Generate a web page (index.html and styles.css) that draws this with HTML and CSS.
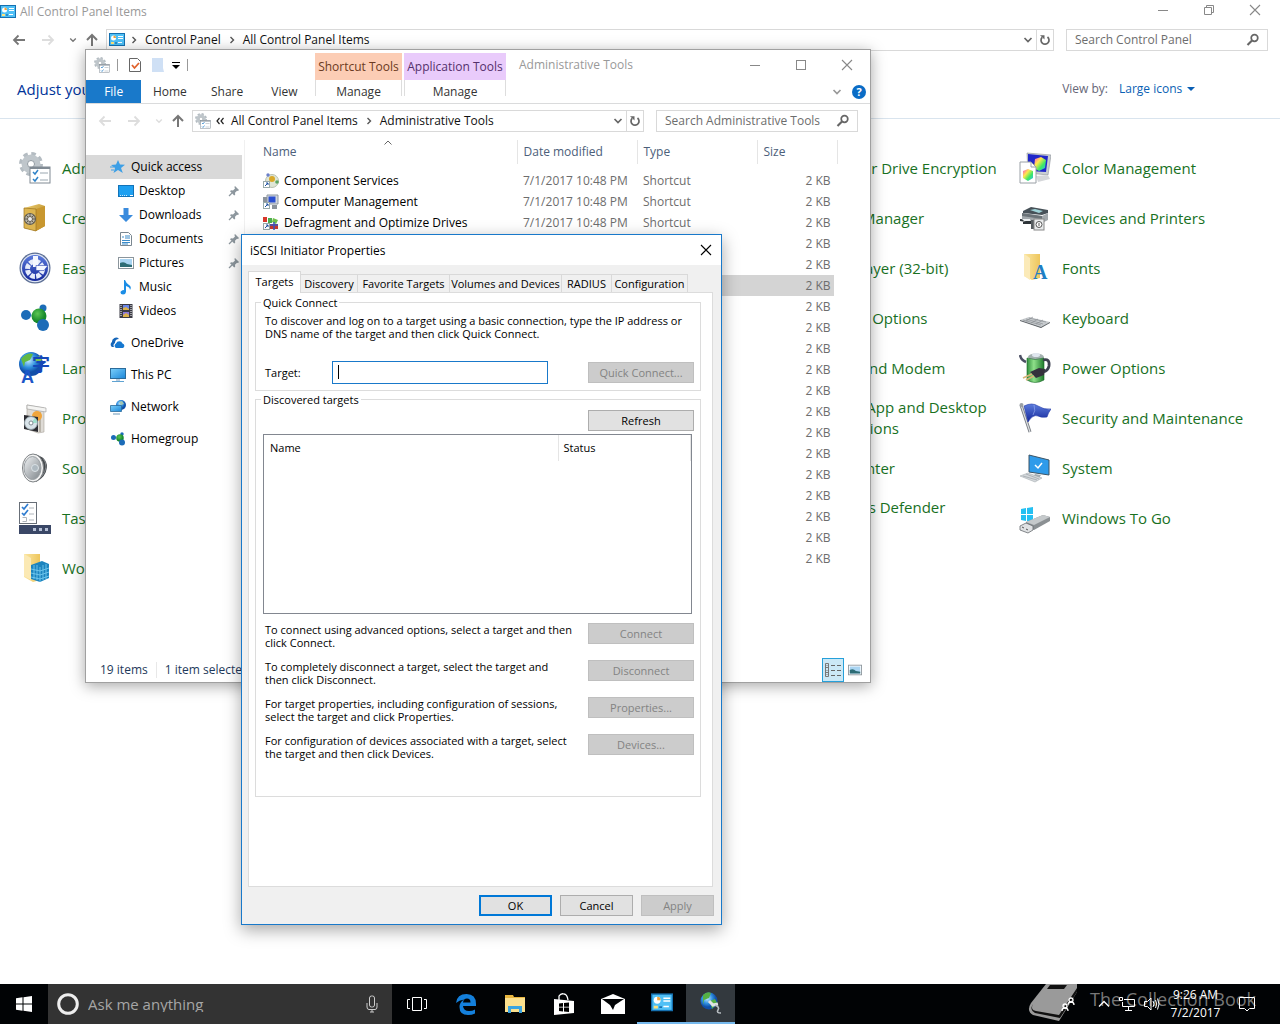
FILE: index.html
```html
<!DOCTYPE html>
<html lang="en">
<head>
    <meta charset="UTF-8">
    <meta name="viewport" content="width=device-width, initial-scale=1.0">
    <title>iSCSI Initiator Properties</title>
    <link rel="stylesheet" href="styles.css">
</head>
<body>

    <!-- Icon sprite -->
    <svg class="sprite" aria-hidden="true">
        <defs>
            <linearGradient id="g-green" x1="0" x2="1"><stop offset="0" stop-color="#2f8f3c"/><stop offset=".4" stop-color="#8fe08a"/><stop offset="1" stop-color="#1e7a2c"/></linearGradient>
            <linearGradient id="g-blue" x1="0" x2="1" y2="1"><stop offset="0" stop-color="#7cd0fb"/><stop offset="1" stop-color="#1b86d8"/></linearGradient>
            <linearGradient id="g-navy" x1="0" x2="0" y2="1"><stop offset="0" stop-color="#5b7bdc"/><stop offset="1" stop-color="#14279a"/></linearGradient>
            <linearGradient id="g-gold" x1="0" x2="1" y2="1"><stop offset="0" stop-color="#f0d070"/><stop offset="1" stop-color="#a87a1c"/></linearGradient>
            <linearGradient id="g-fold" x1="0" x2="1"><stop offset="0" stop-color="#fbe6a2"/><stop offset="1" stop-color="#eec65c"/></linearGradient>
            <linearGradient id="g-grey" x1="0" x2="1" y2="1"><stop offset="0" stop-color="#f0f2f4"/><stop offset="1" stop-color="#7d8489"/></linearGradient>
            <radialGradient id="g-globe" cx=".4" cy=".35"><stop offset="0" stop-color="#c4ecff"/><stop offset=".6" stop-color="#2f8fe0"/><stop offset="1" stop-color="#114fa8"/></radialGradient>
            <radialGradient id="g-ball" cx=".4" cy=".35"><stop offset="0" stop-color="#5cc653"/><stop offset="1" stop-color="#178a2b"/></radialGradient>
            <linearGradient id="g-rain" x1="0" x2="1" y2="1"><stop offset="0" stop-color="#ff4ad2"/><stop offset=".35" stop-color="#ffe84a"/><stop offset=".65" stop-color="#3de864"/><stop offset="1" stop-color="#29b9ff"/></linearGradient>
        </defs>

        <symbol id="i-panel" viewBox="0 0 16 14">
            <rect x=".5" y=".5" width="15" height="12" fill="#4fc0f6" stroke="#1570b0"/>
            <circle cx="4.5" cy="5" r="2.5" fill="#fff"/><path d="M4.500 5V2.500a2.500 2.500 0 0 1 2.500 2.500z" fill="#f2a33a"/>
            <path d="M9 3.500h5M9 5.500h5M9 9.500h4" stroke="#fff"/><rect x="2" y="9" width="3" height="2" fill="#ffe27a"/><path d="M6 10h2" stroke="#0b5c9c"/>
        </symbol>
        <symbol id="i-back" viewBox="0 0 16 16"><path d="M14 8H3M7.500 3.500L3 8l4.500 4.500" fill="none" stroke="currentColor" stroke-width="1.800"/></symbol>
        <symbol id="i-fwd" viewBox="0 0 16 16"><path d="M2 8h11M8.500 3.500L13 8l-4.500 4.500" fill="none" stroke="currentColor" stroke-width="1.800"/></symbol>
        <symbol id="i-up" viewBox="0 0 16 16"><path d="M8 14V3M3 8l5-5 5 5" fill="none" stroke="currentColor" stroke-width="2"/></symbol>
        <symbol id="i-chev" viewBox="0 0 10 10"><path d="M1.500 3l3.500 3.500L8.500 3" fill="none" stroke="currentColor" stroke-width="1.700"/></symbol>
        <symbol id="i-right" viewBox="0 0 8 8"><path d="M2.500 1l3 3-3 3" fill="none" stroke="currentColor" stroke-width="1.400"/></symbol>
        <symbol id="i-refresh" viewBox="0 0 12 12"><path d="M3.200 3.300A4 4 0 1 0 8.500 3" fill="none" stroke="currentColor" stroke-width="1.700"/><path d="M1 1.200h4.500v4.300z" fill="currentColor"/></symbol>
        <symbol id="i-search" viewBox="0 0 14 14"><circle cx="8.500" cy="5" r="3.300" fill="none" stroke="currentColor" stroke-width="1.700"/><path d="M6 7.500L1.500 12" stroke="currentColor" stroke-width="2.200"/></symbol>
        <symbol id="i-min" viewBox="0 0 12 12"><path d="M1 6.500h10" stroke="currentColor"/></symbol>
        <symbol id="i-max" viewBox="0 0 12 12"><rect x="1.500" y="1.500" width="9" height="9" fill="none" stroke="currentColor"/></symbol>
        <symbol id="i-restore" viewBox="0 0 12 12"><path d="M1.500 3.500h7v7h-7zM3.500 3.500v-2h7v7h-2" fill="none" stroke="currentColor"/></symbol>
        <symbol id="i-close" viewBox="0 0 12 12"><path d="M1 1l10 10M11 1L1 11" stroke="currentColor" stroke-width="1.100"/></symbol>

        <symbol id="i-admin" viewBox="0 0 32 32">
            <circle cx="12" cy="12" r="10" fill="none" stroke="#b4bcc2" stroke-width="4" stroke-dasharray="4.400 3.450"/>
            <circle cx="12" cy="12" r="6.500" fill="none" stroke="#bfc6cb" stroke-width="6"/>
            <circle cx="12" cy="12" r="3.500" fill="#fff" stroke="#8f989f"/>
            <rect x="11" y="15" width="20" height="16" fill="#fff" stroke="#808a93"/><path d="M11 16h20" stroke="#808a93" stroke-width="2"/>
            <path d="M14 20l2 2 3-4M14 27l2 2 3-4" fill="none" stroke="#2f83c8" stroke-width="1.500"/><path d="M21 21h8M21 28h8" stroke="#9aa7b0"/>
        </symbol>
        <symbol id="i-safe" viewBox="0 0 32 32">
            <path d="M5 6l15-4 6 2v20l-9 5-12-3z" fill="url(#g-gold)"/><path d="M17 7v22l9-5V4z" fill="#c8972f"/><path d="M5 6l12 1v22L5 26z" fill="#ddb550" stroke="#9c7420" stroke-width=".7"/>
            <circle cx="11" cy="17" r="5.500" fill="#b9b5a8" stroke="#655f51" stroke-width="1.200"/><path d="M11 11v12M5 17h12M7 13l8 8M15 13l-8 8" stroke="#655f51"/><circle cx="11" cy="17" r="2.500" fill="#eee" stroke="#655f51"/>
        </symbol>
        <symbol id="i-ease" viewBox="0 0 32 32">
            <circle cx="16" cy="16" r="15.500" fill="#5c6f95"/><circle cx="16" cy="16" r="14.300" fill="#dfe6f4"/><circle cx="16" cy="16" r="13" fill="url(#g-navy)"/>
            <circle cx="16" cy="17" r="7.500" fill="none" stroke="#e6ecfa" stroke-width="5" stroke-dasharray="4.600 1.290"/>
            <path d="M14 4h5v11h-5z" fill="#f4f7ff"/><path d="M17 13.500h12l-4 5h-8z" fill="#f4f7ff" stroke="#2c45ae" stroke-width=".6"/>
        </symbol>
        <symbol id="i-home" viewBox="0 0 32 32">
            <path d="M7 13l13 1 4-8M20 14l4 10" stroke="#9ccbe8" stroke-width="2" fill="none"/>
            <circle cx="7" cy="13" r="5" fill="#1c6cb8"/><circle cx="24" cy="6" r="3.500" fill="#1c6cb8"/><circle cx="20" cy="14" r="7.500" fill="url(#g-ball)"/><circle cx="24" cy="23" r="6" fill="#1c6cb8"/>
        </symbol>
        <symbol id="i-prog" viewBox="0 0 32 32">
            <path d="M8 3l17 3v24l-6 1-11-4z" fill="#dedbd6" stroke="#a9a49c" stroke-width=".6"/><path d="M8 3l19 3v4L8 7z" fill="#f4f4f2" stroke="#999" stroke-width=".6"/><path d="M21 10v20" stroke="#b9b4aa" stroke-width="2"/><circle cx="18" cy="14" r="5" fill="#f0a53c"/>
            <path d="M5 13l14 2v15L5 27z" fill="#2c2c31"/><circle cx="12" cy="21" r="6.500" fill="#d9e4ea" stroke="#8b989f"/><path d="M12 21l4-5a6 6 0 0 1 2 5z" fill="#9fe0cd"/><circle cx="12" cy="21" r="2" fill="#fff" stroke="#808b92"/>
        </symbol>
        <symbol id="i-sound" viewBox="0 0 32 32">
            <path d="M15 2q13 3 13 13-1 10-11 15z" fill="#44484c"/><path d="M24 6q3 4 3 9-1 6-4 9" stroke="#85898d" fill="none"/>
            <ellipse cx="14" cy="16" rx="10.500" ry="14" fill="#f3f3f3" stroke="#7d8184"/><ellipse cx="13.500" cy="16" rx="8.500" ry="11.500" fill="url(#g-grey)" stroke="#9aa0a4"/><circle cx="16" cy="16" r="3.500" fill="#aeb9c0" stroke="#dbe2e6"/>
        </symbol>
        <symbol id="i-task" viewBox="0 0 32 32">
            <rect x=".5" y=".5" width="17" height="21" fill="#fff" stroke="#686f78"/><path d="M3 5l2 2 4-5M3 11l2 2 4-5" fill="none" stroke="#2f7cd0" stroke-width="1.700"/><path d="M3.500 15.500h4v4h-4M10 6h5M10 12h5M10 18h5" fill="none" stroke="#b0b6bc"/>
            <rect y="23" width="32" height="9" fill="#3a4766"/><path d="M14 27.500h3M20 27.500h3M26 27.500h3" stroke="#b6c0d6" stroke-width="3"/>
        </symbol>
        <symbol id="i-work" viewBox="0 0 32 32">
            <path d="M5 2h16v26l-7 2-9-5z" fill="url(#g-fold)"/><path d="M5 2l7 4v22l-7-4z" fill="#fbe9b4"/>
            <path d="M12 13l11-4 7 3v14l-9 4-9-3z" fill="#1c84bf"/><path d="M21 15v15M12 17l9 2 9-3M12 21l9 2 9-3M12 25l9 2 9-3M15 13v14M18 13v15M24 13v15M27 12v15" stroke="#7cd1f4" stroke-width=".8" fill="none"/>
        </symbol>
        <symbol id="i-color" viewBox="0 0 32 32">
            <path d="M8 1l24 2-3 20-20-2z" fill="#c9ced3" stroke="#8b9197" stroke-width=".6"/><path d="M9 2l20 2-2 16-18-1z" fill="#2127c9"/><path d="M16 7l6-2 5 3-1 8-6 3-5-3z" fill="url(#g-rain)"/>
            <path d="M17 24l12-1 2 4-12 3z" fill="#d5d7da"/><path d="M1 10h11l5 5v16H1z" fill="#fff" stroke="#9aa0a6"/><path d="M12 10v5h5" fill="none" stroke="#9aa0a6"/><path d="M4 19l5-2 5 2v7l-5 3-5-3z" fill="url(#g-rain)"/>
        </symbol>
        <symbol id="i-print" viewBox="0 0 32 32">
            <path d="M4 9l8-4 17 3v3l-6 2-19-2z" fill="#475158"/><path d="M11 8l5-1 8 2-4 2z" fill="#9fd3d8"/><path d="M3 11l20 3 6-3v7l-6 3-20-4z" fill="#a2a8ac"/><path d="M3 11l20 3v3L3 14z" fill="#6b7378"/>
            <path d="M1 17l12 1v3L1 19zM4 20h8v2H4z" fill="#2e3438"/><path d="M3 17l8 0 1 2-7 0z" fill="#eceff0"/><path d="M12 18h4v9h-4z" fill="#565c60"/><rect x="15" y="17" width="10" height="11" fill="#e8eaeb" stroke="#888"/><circle cx="20" cy="22.500" r="3" fill="#fff" stroke="#555"/><path d="M20 21v3" stroke="#555"/>
        </symbol>
        <symbol id="i-keyb" viewBox="0 0 32 32">
            <path d="M1 18l9-3 21 5-9 6z" fill="#c7cbce"/><path d="M1 18v1l21 7v-1zM22 25v1l9-5v-1z" fill="#5d6266"/><path d="M4 18l18 5M7 17l17 5M10 16l17 4M7 19l7-4M12 21l7-4M17 22l7-4" stroke="#8c9195" stroke-width=".7"/>
        </symbol>
        <symbol id="i-power" viewBox="0 0 32 32">
            <path d="M1 3q1 5 6 7" fill="none" stroke="#4b4f63" stroke-width="2.500"/><ellipse cx="17" cy="5" rx="8" ry="3.500" fill="#a4b1b0"/><ellipse cx="17" cy="3" rx="4" ry="2" fill="#dfe6ee"/>
            <path d="M8 6v22q8 5 17 0V6q-9 3-17 0z" fill="url(#g-green)" stroke="#1a6a27" stroke-width=".6"/><path d="M24 8q7-2 6 6-1 5-6 6" fill="none" stroke="#3d4050" stroke-width="2.800"/>
            <path d="M11 20l9-4 6 1-1 6-8 3z" fill="#34313c"/><path d="M4 26l9-4M7 28l8-4" stroke="#d7b377" stroke-width="1.800"/>
        </symbol>
        <symbol id="i-flag" viewBox="0 0 32 32">
            <path d="M2 3l9 27" stroke="#777c82" stroke-width="3"/><path d="M2 3l9 27" stroke="#dcdfe2" stroke-width="1.200"/><circle cx="2.500" cy="3" r="2" fill="#9ba0a5"/>
            <path d="M5 4q8-4 14 0 6 4 13 3-3 4-4 8-6 1-9-1-5-2-10 6z" fill="url(#g-navy)" stroke="#2038a8" stroke-width=".6"/><path d="M15 3q2 6-1 10" stroke="#9db1f4" fill="none" opacity=".6"/>
        </symbol>
        <symbol id="i-sys" viewBox="0 0 32 32">
            <path d="M10 3l20 5v15l-20-3z" fill="#2f9bea" stroke="#3c5566"/><path d="M16 13l3 3 4-5" fill="none" stroke="#fff" stroke-width="1.500"/><path d="M16 22l6 1-2 3-6-1z" fill="#a4adb3"/><path d="M1 24l8-3 14 5-7 4z" fill="#d4d8db" stroke="#9ba2a7" stroke-width=".5"/><path d="M4 24l14 4M7 22l13 5" stroke="#9ba2a7" stroke-width=".7"/>
        </symbol>
        <symbol id="i-togo" viewBox="0 0 32 32">
            <path d="M2 7l5-1v6H2zM8 6l6-1v7H8zM2 13h5v6l-5-1zM8 13h6v7l-6-1z" fill="#25c0f2"/>
            <path d="M7 20l17-7 7 2v4l-16 9-8-3z" fill="#8b9093"/><path d="M7 20l17-7 7 2-16 8z" fill="#c5c9cb"/><path d="M1 24l6-3 7 3v4l-5 3-8-3z" fill="#dfe1e3" stroke="#666b6e" stroke-width=".8"/><path d="M3 25l2 1M7 27l2 1" stroke="#555"/>
        </symbol>

        <symbol id="i-star" viewBox="0 0 16 16"><path d="M8 1l2 4.500 5 .3-4 3.200 1.800 5L8 11l-4.500 3 1.500-5L1 6l5-.5z" fill="#3c9fe6"/><path d="M0 8h4M1 11h3" stroke="#3c9fe6"/></symbol>
        <symbol id="i-desk" viewBox="0 0 16 16"><rect x=".5" y="2.500" width="15" height="11" fill="#1ea0f1" stroke="#1373b8"/><path d="M2 12.500h7" stroke="#cdeaff" stroke-dasharray="1 1"/><path d="M12 12.500h3" stroke="#fff"/></symbol>
        <symbol id="i-down" viewBox="0 0 16 16"><path d="M5.500 1h5v7H15l-7 7-7-7h4.500z" fill="#3a8bdd"/></symbol>
        <symbol id="i-doc" viewBox="0 0 16 16"><path d="M2.500 1.500h8l3 3v10h-11z" fill="#fff" stroke="#7a8791"/><path d="M4 6h2M7 5h5M7 7h5M4 9.500h8M4 11.500h8M4 13h6" stroke="#3a8bc9"/></symbol>
        <symbol id="i-pic" viewBox="0 0 16 16"><rect x=".5" y="2.500" width="15" height="11" fill="#fff" stroke="#8b959c"/><rect x="2" y="4" width="12" height="8" fill="#a9d4f2"/><path d="M2 8q4-2 7 1l5 1v2H2z" fill="#2d6c75"/></symbol>
        <symbol id="i-music" viewBox="0 0 16 16"><path d="M7 1q1 3 4 5t1 5q0-3-4-4v6a3 3 0 0 1-3 2.500q-2.500 0-2.500-2T6 11V1z" fill="#1c8ee6"/></symbol>
        <symbol id="i-video" viewBox="0 0 16 16"><rect x="1.500" y="1" width="13" height="14" fill="#3a3a44"/><path d="M3 2v12M13 2v12" stroke="#fff" stroke-dasharray="1 1"/><path d="M5 2h6v5H5z" fill="#6a86e8"/><path d="M5 9h6v5H5z" fill="#8d7ad8"/><path d="M5 5l3-1 3 2v1H5zM5 12l3-2 3 2v2H5z" fill="#d9b04c"/></symbol>
        <symbol id="i-cloud" viewBox="0 0 16 16"><path d="M2 12a3 3 0 0 1 0-5 4 4 0 0 1 7-3 4 4 0 0 0-4 4 3 3 0 0 0-1 4z" fill="#1565b8"/><path d="M6 13a2.500 2.500 0 0 1 0-4.500 3.500 3.500 0 0 1 6.500 0A2.400 2.400 0 0 1 13 13z" fill="#1678d0"/></symbol>
        <symbol id="i-pc" viewBox="0 0 16 16"><rect x=".5" y="1.500" width="15" height="10" fill="url(#g-blue)" stroke="#2b6b9a"/><path d="M2 14.500h12" stroke="#5fa3d2"/><path d="M6 12h4v2H6z" fill="#bcd"/></symbol>
        <symbol id="i-net" viewBox="0 0 16 16"><circle cx="11" cy="6" r="5" fill="url(#g-globe)"/><path d="M9 3l3-1 2 3-3 1z" fill="#a3c6b0"/><path d="M.5 6.500h11v6H.500z" fill="url(#g-blue)" stroke="#2b6b9a" stroke-width=".8"/><path d="M3 15h7" stroke="#6b97b8"/></symbol>
        <symbol id="i-pin" viewBox="0 0 12 12"><path d="M7 1l4 4-1 1-1-.3-2 2 .2 2-1 .8L2 6.300l1-1 2 .2 2-2L6.400 2z" fill="#8d979e"/><path d="M1 11l3-3" stroke="#8d979e" stroke-width="1.200"/></symbol>
        <symbol id="i-comp" viewBox="0 0 16 16"><circle cx="9" cy="8" r="6.500" fill="#dfe6d6" stroke="#b8c0b0"/><circle cx="9" cy="6" r="3" fill="#d9a92b"/><circle cx="5" cy="2" r="1.700" fill="#6a7fc9"/><circle cx="14" cy="9" r="1.800" fill="#5aa562"/><rect x=".5" y="8.500" width="6" height="6" fill="#fff" stroke="#9aa"/><path d="M2 13l3-3M3 10h2v2" stroke="#1a4fa0" fill="none"/></symbol>
        <symbol id="i-comp2" viewBox="0 0 16 16"><path d="M4 1h11v9H4z" fill="#d3d8de" stroke="#8d97a1"/><path d="M5.500 2.500h7v6h-7z" fill="#2a4fd0"/><path d="M0 3h4v5H0zM9 11h5v4H9z" fill="#8b939b"/><rect x=".5" y="8.500" width="6" height="6" fill="#fff" stroke="#9aa"/><path d="M2 13l3-3M3 10h2v2" stroke="#1a4fa0" fill="none"/></symbol>
        <symbol id="i-defrag" viewBox="0 0 16 16"><path d="M0 2h4v5H0z" fill="#d8382c"/><path d="M5 3h4v5H5z" fill="#4cae4f"/><path d="M10 3l5 2-2 4-4-2z" fill="#6fbf4a"/><path d="M7 9h8v5H7z" fill="#c83a30"/><path d="M7 10h8M11 7v8" stroke="#3a57c0" stroke-width="1.500"/><rect x=".5" y="8.500" width="6" height="6" fill="#fff" stroke="#9aa"/><path d="M2 13l3-3M3 10h2v2" stroke="#1a4fa0" fill="none"/></symbol>
    </svg>

    <main class="desktop">

        <!-- Control Panel (maximized) -->
        <section class="panel-window">
            <header class="title-bar">
                <svg class="icon16"><use href="#i-panel"/></svg>
                <span class="title">All Control Panel Items</span>
                <div class="window-controls">
                    <button aria-label="Minimize"><svg><use href="#i-min"/></svg></button>
                    <button aria-label="Restore"><svg><use href="#i-restore"/></svg></button>
                    <button aria-label="Close"><svg><use href="#i-close"/></svg></button>
                </div>
            </header>
            <div class="nav-bar">
                <div class="nav-buttons">
                    <button aria-label="Back"><svg class="icon16"><use href="#i-back"/></svg></button>
                    <button aria-label="Forward" class="off"><svg class="icon16"><use href="#i-fwd"/></svg></button>
                    <button aria-label="Recent"><svg class="icon8"><use href="#i-chev"/></svg></button>
                    <button aria-label="Up"><svg class="icon16"><use href="#i-up"/></svg></button>
                </div>
                <div class="address">
                    <svg class="icon16"><use href="#i-panel"/></svg>
                    <svg class="crumb-arrow"><use href="#i-right"/></svg>
                    <a href="#">Control Panel</a>
                    <svg class="crumb-arrow"><use href="#i-right"/></svg>
                    <a href="#">All Control Panel Items</a>
                    <button class="drop" aria-label="Previous locations"><svg><use href="#i-chev"/></svg></button>
                    <button class="refresh" aria-label="Refresh"><svg><use href="#i-refresh"/></svg></button>
                </div>
                <div class="search">
                    <input type="text" aria-label="Search Control Panel" placeholder="Search Control Panel">
                    <svg><use href="#i-search"/></svg>
                </div>
            </div>
            <div class="panel-head">
                <h1>Adjust your computer's settings</h1>
                <div class="view-by">
                    <label for="view-by">View by:</label>
                    <select id="view-by"><option>Large icons</option></select>
                    <svg viewBox="0 0 8 4"><path d="M0 0h8L4 4z" fill="#0a5fb4"/></svg>
                </div>
            </div>
            <nav class="items">
                <a class="item" href="#"><svg><use href="#i-admin"/></svg><span>Administrative Tools</span></a>
                <a class="item" href="#"><svg><use href="#i-safe"/></svg><span>BitLocker Drive Encryption</span></a>
                <a class="item" href="#"><svg><use href="#i-color"/></svg><span>Color Management</span></a>
                <a class="item" href="#"><svg><use href="#i-safe"/></svg><span>Credential Manager</span></a>
                <a class="item" href="#"><svg><use href="#i-print"/></svg><span>Device Manager</span></a>
                <a class="item" href="#"><svg><use href="#i-print"/></svg><span>Devices and Printers</span></a>
                <a class="item" href="#"><svg><use href="#i-ease"/></svg><span>Ease of Access Center</span></a>
                <a class="item" href="#"><svg><use href="#i-prog"/></svg><span>Flash Player (32-bit)</span></a>
                <a class="item" href="#"><svg viewBox="0 0 32 32"><path d="M5 2h16v24l-8 2-8-4z" fill="url(#g-fold)"/><path d="M5 2l6 4v22l-6-4z" fill="#fbeab8"/><text x="14" y="27" class="glyph-font">A</text></svg><span>Fonts</span></a>
                <a class="item" href="#"><svg><use href="#i-home"/></svg><span>HomeGroup</span></a>
                <a class="item" href="#"><svg><use href="#i-net"/></svg><span>Internet Options</span></a>
                <a class="item" href="#"><svg><use href="#i-keyb"/></svg><span>Keyboard</span></a>
                <a class="item" href="#"><svg viewBox="0 0 32 32"><circle cx="12" cy="12" r="12" fill="url(#g-globe)"/><path d="M2 7q6-7 12-5l-3 6-5 2-1 5z" fill="#62b943"/><path d="M15 6l6-2 2 4-5 3z" fill="#79c455"/><text x="13" y="19" class="glyph-zi">字</text><text x="2" y="31" class="glyph-a">A</text></svg><span>Language</span></a>
                <a class="item" href="#"><svg><use href="#i-print"/></svg><span>Phone and Modem</span></a>
                <a class="item" href="#"><svg><use href="#i-power"/></svg><span>Power Options</span></a>
                <a class="item" href="#"><svg><use href="#i-prog"/></svg><span>Programs and Features</span></a>
                <a class="item" href="#"><svg><use href="#i-sys"/></svg><span>RemoteApp and Desktop Connections</span></a>
                <a class="item" href="#"><svg><use href="#i-flag"/></svg><span>Security and Maintenance</span></a>
                <a class="item" href="#"><svg><use href="#i-sound"/></svg><span>Sound</span></a>
                <a class="item" href="#"><svg><use href="#i-home"/></svg><span>Sync Center</span></a>
                <a class="item" href="#"><svg><use href="#i-sys"/></svg><span>System</span></a>
                <a class="item" href="#"><svg><use href="#i-task"/></svg><span>Taskbar and Navigation</span></a>
                <a class="item" href="#"><svg><use href="#i-safe"/></svg><span>Windows Defender<br>Firewall</span></a>
                <a class="item" href="#"><svg><use href="#i-togo"/></svg><span>Windows To Go</span></a>
                <a class="item" href="#"><svg><use href="#i-work"/></svg><span>Work Folders</span></a>
            </nav>
        </section>

        <!-- Administrative Tools -->
        <section class="tools-window">
            <header class="ribbon">
                <div class="quick-bar">
                    <svg class="icon16"><use href="#i-admin"/></svg>
                    <span class="bar-line"></span>
                    <button aria-label="Properties"><svg class="icon16" viewBox="0 0 16 16"><path d="M2.500 1.500h8l3 3v10h-11z" fill="#fff" stroke="#666"/><path d="M5 8l2.500 3L12 6" fill="none" stroke="#e0622c" stroke-width="1.800"/></svg></button>
                    <button aria-label="New folder"><svg class="icon16" viewBox="0 0 16 16"><path d="M2 1h11v10l1 4H2z" fill="#cfe0f5"/></svg></button>
                    <button aria-label="Customize"><svg class="icon8" viewBox="0 0 8 8"><path d="M0 1.500h8" stroke="#000"/><path d="M0 4h8L4 8z" fill="#000"/></svg></button>
                    <span class="bar-line"></span>
                </div>
                <div class="context context-shortcut">Shortcut Tools</div>
                <div class="context context-app">Application Tools</div>
                <div class="ribbon-title">
                    <span class="title">Administrative Tools</span>
                    <div class="window-controls">
                        <button aria-label="Minimize"><svg><use href="#i-min"/></svg></button>
                        <button aria-label="Maximize"><svg><use href="#i-max"/></svg></button>
                        <button aria-label="Close"><svg><use href="#i-close"/></svg></button>
                    </div>
                </div>
                <div class="ribbon-tabs">
                    <button class="file-tab">File</button>
                    <button>Home</button>
                    <button>Share</button>
                    <button>View</button>
                </div>
                <button class="manage">Manage</button>
                <button class="manage manage-app">Manage</button>
                <div class="ribbon-end">
                    <button aria-label="Expand ribbon"><svg class="icon10"><use href="#i-chev"/></svg></button>
                    <button aria-label="Help"><svg class="icon14" viewBox="0 0 14 14"><circle cx="7" cy="7" r="7" fill="#0a6cc6"/><text x="7" y="11" class="glyph-help">?</text></svg></button>
                </div>
            </header>
            <div class="nav-bar">
                <div class="nav-buttons">
                    <button aria-label="Back" class="off"><svg class="icon16"><use href="#i-back"/></svg></button>
                    <button aria-label="Forward" class="off"><svg class="icon16"><use href="#i-fwd"/></svg></button>
                    <button aria-label="Recent" class="off"><svg class="icon8"><use href="#i-chev"/></svg></button>
                    <button aria-label="Up"><svg class="icon16"><use href="#i-up"/></svg></button>
                </div>
                <div class="address">
                    <svg class="icon16"><use href="#i-admin"/></svg>
                    <svg class="crumb-arrow" viewBox="0 0 8 8"><path d="M3.500 1L1 4l2.500 3M7.500 1L5 4l2.500 3" fill="none" stroke="#222" stroke-width="1.200"/></svg>
                    <a href="#">All Control Panel Items</a>
                    <svg class="crumb-arrow"><use href="#i-right"/></svg>
                    <a href="#">Administrative Tools</a>
                    <button class="drop" aria-label="Previous locations"><svg><use href="#i-chev"/></svg></button>
                    <button class="refresh" aria-label="Refresh"><svg><use href="#i-refresh"/></svg></button>
                </div>
                <div class="search">
                    <input type="text" aria-label="Search Administrative Tools" placeholder="Search Administrative Tools">
                    <svg><use href="#i-search"/></svg>
                </div>
            </div>
            <div class="tools-body">
                <nav class="side">
                    <a href="#" class="root current"><svg class="icon16"><use href="#i-star"/></svg>Quick access</a>
                    <a href="#"><svg class="icon16"><use href="#i-desk"/></svg>Desktop<svg class="pin"><use href="#i-pin"/></svg></a>
                    <a href="#"><svg class="icon16"><use href="#i-down"/></svg>Downloads<svg class="pin"><use href="#i-pin"/></svg></a>
                    <a href="#"><svg class="icon16"><use href="#i-doc"/></svg>Documents<svg class="pin"><use href="#i-pin"/></svg></a>
                    <a href="#"><svg class="icon16"><use href="#i-pic"/></svg>Pictures<svg class="pin"><use href="#i-pin"/></svg></a>
                    <a href="#"><svg class="icon16"><use href="#i-music"/></svg>Music</a>
                    <a href="#"><svg class="icon16"><use href="#i-video"/></svg>Videos</a>
                    <a href="#" class="root"><svg class="icon16"><use href="#i-cloud"/></svg>OneDrive</a>
                    <a href="#" class="root"><svg class="icon16"><use href="#i-pc"/></svg>This PC</a>
                    <a href="#" class="root"><svg class="icon16"><use href="#i-net"/></svg>Network</a>
                    <a href="#" class="root"><svg class="icon16"><use href="#i-home"/></svg>Homegroup</a>
                </nav>
                <div class="files-wrap">
                    <svg class="sort-mark" viewBox="0 0 8 5"><path d="M.5 4.500L4 1l3.500 3.500" fill="none" stroke="#666"/></svg>
                    <table class="files">
                        <thead>
                            <tr><th class="col-name">Name</th><th class="col-mid">Date modified</th><th class="col-mid">Type</th><th class="col-size">Size</th></tr>
                        </thead>
                        <tbody>
                            <tr><td><svg class="icon16"><use href="#i-comp"/></svg>Component Services</td><td>7/1/2017 10:48 PM</td><td>Shortcut</td><td>2 KB</td></tr>
                            <tr><td><svg class="icon16"><use href="#i-comp2"/></svg>Computer Management</td><td>7/1/2017 10:48 PM</td><td>Shortcut</td><td>2 KB</td></tr>
                            <tr><td><svg class="icon16"><use href="#i-defrag"/></svg>Defragment and Optimize Drives</td><td>7/1/2017 10:48 PM</td><td>Shortcut</td><td>2 KB</td></tr>
                            <tr><td></td><td></td><td></td><td>2 KB</td></tr>
                            <tr><td></td><td></td><td></td><td>2 KB</td></tr>
                            <tr class="selected"><td></td><td></td><td></td><td>2 KB</td></tr>
                            <tr><td></td><td></td><td></td><td>2 KB</td></tr>
                            <tr><td></td><td></td><td></td><td>2 KB</td></tr>
                            <tr><td></td><td></td><td></td><td>2 KB</td></tr>
                            <tr><td></td><td></td><td></td><td>2 KB</td></tr>
                            <tr><td></td><td></td><td></td><td>2 KB</td></tr>
                            <tr><td></td><td></td><td></td><td>2 KB</td></tr>
                            <tr><td></td><td></td><td></td><td>2 KB</td></tr>
                            <tr><td></td><td></td><td></td><td>2 KB</td></tr>
                            <tr><td></td><td></td><td></td><td>2 KB</td></tr>
                            <tr><td></td><td></td><td></td><td>2 KB</td></tr>
                            <tr><td></td><td></td><td></td><td>2 KB</td></tr>
                            <tr><td></td><td></td><td></td><td>2 KB</td></tr>
                            <tr><td></td><td></td><td></td><td>2 KB</td></tr>
                        </tbody>
                    </table>
                </div>
            </div>
            <footer class="status-bar">
                <span>19 items</span>
                <span class="status-line"></span>
                <span>1 item selected</span>
                <div class="view-buttons">
                    <button class="active" aria-label="Details view"><svg class="icon16" viewBox="0 0 16 16"><path d="M.5 1.500h3v13h-3zM0 5.500h4M0 10.500h4M2 3v1M2 8v1M2 12v1" fill="none" stroke="#777"/><path d="M6 3.500h4M12 3.500h4M6 8.500h4M12 8.500h4M6 13.500h4M12 13.500h4" stroke="#666"/></svg></button>
                    <button aria-label="Thumbnail view"><svg class="icon14"><use href="#i-pic"/></svg></button>
                </div>
            </footer>
        </section>

        <!-- iSCSI dialog -->
        <form class="dialog">
            <header class="dialog-title">
                <span>iSCSI Initiator Properties</span>
                <button type="button" aria-label="Close"><svg><use href="#i-close"/></svg></button>
            </header>
            <div class="tabs" role="tablist">
                <button type="button" role="tab" class="tab tab-on">Targets</button>
                <button type="button" role="tab" class="tab tab-discovery">Discovery</button>
                <button type="button" role="tab" class="tab tab-favorite">Favorite Targets</button>
                <button type="button" role="tab" class="tab tab-volumes">Volumes and Devices</button>
                <button type="button" role="tab" class="tab tab-radius">RADIUS</button>
                <button type="button" role="tab" class="tab tab-config">Configuration</button>
            </div>
            <div class="page">
                <fieldset class="quick">
                    <legend>Quick Connect</legend>
                    <p>To discover and log on to a target using a basic connection, type the IP address or<br>DNS name of the target and then click Quick Connect.</p>
                    <div class="target-row">
                        <label for="target">Target:</label>
                        <input type="text" id="target" name="target">
                        <button type="button" class="btn wide" disabled>Quick Connect...</button>
                    </div>
                </fieldset>
                <fieldset class="found">
                    <legend>Discovered targets</legend>
                    <button type="button" class="btn wide">Refresh</button>
                    <div class="target-list">
                        <table>
                            <thead><tr><th class="col-target">Name</th><th>Status</th></tr></thead>
                        </table>
                    </div>
                    <div class="action"><p>To connect using advanced options, select a target and then<br>click Connect.</p><button type="button" class="btn wide" disabled>Connect</button></div>
                    <div class="action"><p>To completely disconnect a target, select the target and<br>then click Disconnect.</p><button type="button" class="btn wide" disabled>Disconnect</button></div>
                    <div class="action"><p>For target properties, including configuration of sessions,<br>select the target and click Properties.</p><button type="button" class="btn wide" disabled>Properties...</button></div>
                    <div class="action"><p>For configuration of devices associated with a target, select<br>the target and then click Devices.</p><button type="button" class="btn wide" disabled>Devices...</button></div>
                </fieldset>
            </div>
            <div class="dialog-buttons">
                <button type="button" class="btn default">OK</button>
                <button type="button" class="btn">Cancel</button>
                <button type="button" class="btn" disabled>Apply</button>
            </div>
        </form>
    </main>

    <footer class="taskbar">
        <button class="task" aria-label="Start"><svg class="icon16" viewBox="0 0 16 16"><path d="M0 2.300l6.500-1v6.200H0zM7.500 1.200L16 0v7.500H7.500zM0 8.500h6.500v6.200l-6.500-1zM7.500 8.500H16V16l-8.500-1.200z" fill="#fff"/></svg></button>
        <div class="cortana">
            <svg class="icon22" viewBox="0 0 22 22"><circle cx="11" cy="11" r="9.300" fill="none" stroke="#eee" stroke-width="3"/></svg>
            <input type="text" aria-label="Ask me anything" placeholder="Ask me anything">
            <svg class="mic" viewBox="0 0 12 18"><rect x="3.500" y="1" width="5" height="11" rx="2" fill="none" stroke="#ccc"/><path d="M1 8v4q0 2.500 2 2.500h6q2 0 2-2.500V8M6 14.500V17M4 17h4" fill="none" stroke="#ccc"/></svg>
        </div>
        <button class="task" aria-label="Task view"><svg class="icon22" viewBox="0 0 22 22"><path d="M6.500 4.500h9v13h-9zM4 6.500H1.500v9H4M18 6.500h2.500v9H18" fill="none" stroke="#fff"/></svg></button>
        <button class="task" aria-label="Edge"><svg class="icon22" viewBox="0 0 22 22"><path d="M1 10Q2 1 11.500 1 21 1 21 11v2H8q.5 5 6 5 3.500 0 6-1.600v4Q17 22 13 22 4.500 22 4.500 14q0-5 4.500-7.500Q4 7 1 10zm7-.5h7.500Q15.500 5.500 12 5.500T8 9.500z" fill="#1480dc"/></svg></button>
        <button class="task" aria-label="File Explorer"><svg class="icon22" viewBox="0 0 22 22"><path d="M1 2h8l1 2h11v15H1z" fill="#e8b63f"/><path d="M1 5h20v14H1z" fill="#fbe08e"/><path d="M4 20v-7h14v7h-3v-4H7v4z" fill="#3aa4e0"/></svg></button>
        <button class="task" aria-label="Store"><svg class="icon22" viewBox="0 0 22 22"><path d="M1 6l20 2v12l-20 2z" fill="#fff"/><path d="M6 7V3q2-3 5-2 3 0 4 6" fill="none" stroke="#fff" stroke-width="1.300"/><path d="M6 10.500l4-.4v3.700H6zM11 10l5-.5v4.300h-5zM6 14.600h4v3.800l-4-.4zM11 14.600h5v4.300l-5-.4z" fill="#000"/></svg></button>
        <button class="task" aria-label="Mail"><svg class="mail" viewBox="0 0 24 20"><path d="M0 5l12-5 12 5v15H0z" fill="#fff"/><path d="M1 5h22l-9 6-2 5-3-5z" fill="#010305"/></svg></button>
        <button class="task open" aria-label="Control Panel"><svg class="icon22" viewBox="0 0 16 16"><use href="#i-panel" width="16" height="16"/></svg></button>
        <button class="task open current" aria-label="iSCSI Initiator"><svg class="icon22" viewBox="0 0 22 22"><circle cx="9" cy="9" r="8.500" fill="url(#g-globe)"/><path d="M3 3q4-4 8-2l-2 5-5 2-1 5zM10 9l5-2 2 4-5 6z" fill="#55b045"/><path d="M9 9l4 4 5-1" fill="none" stroke="#dfe3e5" stroke-width="3"/><path d="M15 13q5 2 3 5t3 3" fill="none" stroke="#b9bfc3" stroke-width="1.600"/></svg></button>

        <div class="tray">
            <svg class="people" viewBox="0 0 14 14"><path d="M1 14a3 3 0 0 1 6 0M7 8a3 3 0 0 1 6 0" fill="none" stroke="#fff" stroke-width="1.300"/><circle cx="4" cy="9" r="2" fill="none" stroke="#fff" stroke-width="1.300"/><circle cx="10" cy="3" r="2" fill="none" stroke="#fff" stroke-width="1.300"/></svg>
            <svg class="up-mark" viewBox="0 0 12 8"><path d="M1 6.500l5-5 5 5" fill="none" stroke="#fff" stroke-width="1.300"/></svg>
            <svg class="icon16" viewBox="0 0 16 16"><path d="M5 3.500h10.500v7H3.500V6M9.500 10.500v4M6 14.500h7M.5 1.500h3v3h-3z" fill="none" stroke="#fff"/></svg>
            <svg class="icon16" viewBox="0 0 16 16"><path d="M.5 5.500h3L7 2v12L3.500 10.500h-3zM9 5q2 3 0 6M11.500 4q2.500 4 0 8M13.500 2.500q3 5.500 0 11" fill="none" stroke="#fff"/></svg>
            <time class="clock">9:26 AM<br>7/2/2017</time>
            <svg class="icon16" viewBox="0 0 16 16"><path d="M.5 1.500h15v11h-5L8 15l-2.500-2.500h-5z" fill="none" stroke="#fff"/></svg>
        </div>
        <div class="watermark">
            <svg viewBox="0 0 52 38"><path d="M18 0h31v8L31 37 5 31Q-2 27 3 19z" fill="#9a9a9a"/><path d="M5 20q-3 6 3 7l23 4 18-27v4L32 34 7 29Q1 26 5 20z" fill="#111"/><path d="M22 1h17l-3 4H19z" fill="#111"/></svg>
            <span>The Collection Book</span>
        </div>
    </footer>

</body>
</html>
```

FILE: styles.css
```css
* {
    box-sizing: border-box;
}

body {
    margin: 0;
    min-height: 100vh;
    display: flex;
    flex-direction: column;
    background-color: white;
    font-family: "Open Sans", "Noto Sans", sans-serif;
    font-size: 12px;
    line-height: 16px;
    color: black;
    overflow: hidden;
}

button, input, select {
    font: inherit;
    color: inherit;
    margin: 0;
    padding: 0;
    border: none;
    background: none;
    outline: none;
}

a {
    color: inherit;
    text-decoration: none;
}

svg {
    display: block;
    flex-shrink: 0;
}

.sprite {
    position: absolute;
    width: 0;
    height: 0;
}

.icon8 { width: 8px; height: 8px; }
.icon10 { width: 10px; height: 10px; }
.icon14 { width: 14px; height: 14px; }
.icon16 { width: 16px; height: 16px; }
.icon22 { width: 22px; height: 22px; }

.glyph-zi { font: bold 18px "Noto Sans CJK SC", sans-serif; fill: #1547b8; }
.glyph-a { font: bold 18px "Liberation Sans", sans-serif; fill: #1c56c8; }
.glyph-font { font: bold 20px "Liberation Serif", serif; fill: #1f7fc4; }
.glyph-help { font: bold 11px "Open Sans", sans-serif; fill: white; text-anchor: middle; }

.desktop {
    flex: 1;
    position: relative;
}

/* Control Panel window */
.title-bar {
    display: flex;
    align-items: center;
    height: 24px;
}

.title {
    color: #999;
}

.title-bar .title {
    margin-left: 4px;
    flex: 1;
}

.window-controls {
    display: flex;
}

.window-controls button {
    width: 46px;
    height: 20px;
    display: flex;
    align-items: center;
    justify-content: center;
    color: #888;
}

.window-controls svg {
    width: 12px;
    height: 12px;
}

.title-bar .window-controls {
    align-self: flex-start;
    margin-right: 2px;
}

.nav-bar {
    display: flex;
    padding: 5px 12px 0 11px;
}

.nav-buttons {
    display: flex;
    align-items: center;
    width: 95px;
    gap: 13px;
    color: #777;
}

.nav-buttons button:nth-child(3) {
    margin-right: -6px;
}

.nav-buttons .off {
    color: #ddd;
}

.address {
    flex: 1;
    display: flex;
    align-items: center;
    height: 22px;
    border: 1px solid #d9d9d9;
    padding-left: 2px;
    color: #111;
}

.crumb-arrow {
    width: 8px;
    height: 8px;
    margin: 0 7px;
    color: #555;
}

.address .icon16 + .crumb-arrow {
    margin-left: 5px;
}

.drop {
    margin-left: auto;
    padding: 0 3px;
    color: #666;
}

.drop svg {
    width: 10px;
    height: 10px;
}

.refresh {
    width: 17px;
    height: 20px;
    border-left: 1px solid #d9d9d9;
    color: #666;
    display: flex;
    align-items: center;
    justify-content: center;
}

.refresh svg {
    width: 12px;
    height: 12px;
}

.search {
    width: 202px;
    height: 22px;
    margin-left: 12px;
    border: 1px solid #d9d9d9;
    display: flex;
    align-items: center;
    padding: 0 7px 0 8px;
    color: #666;
}

.search input {
    flex: 1;
    min-width: 0;
}

.search svg {
    width: 14px;
    height: 14px;
}

input::placeholder {
    color: #6d6d6d;
    opacity: 1;
}

.panel-head {
    display: flex;
    align-items: center;
    justify-content: space-between;
    height: 68px;
    padding: 9px 85px 0 17px;
    border-bottom: 1px solid #d9e4ee;
}

.panel-head h1 {
    margin: 0;
    font-size: 15px;
    font-weight: normal;
    line-height: 24px;
    color: #003399;
}

.view-by {
    display: flex;
    align-items: center;
    color: #667;
}

.view-by select {
    appearance: none;
    margin: 0 4px 0 11px;
    color: #0a5fb4;
}

.view-by svg {
    width: 8px;
    height: 4px;
}

.items {
    display: grid;
    grid-template-columns: repeat(5, 1fr);
    grid-auto-rows: 50px;
    padding: 24px 11px 0 19px;
}

.item {
    display: flex;
    align-items: center;
    gap: 11px;
    font-size: 15px;
    line-height: 21px;
    color: #19711f;
}

.item svg {
    width: 32px;
    height: 32px;
}

.item:nth-child(3n+1) { grid-column: 1; }
.item:nth-child(3n+2) { grid-column: 4; }
.item:nth-child(3n) { grid-column: 5; }

/* Administrative Tools window */
.tools-window {
    position: absolute;
    left: 85px;
    top: 49px;
    width: 786px;
    height: 634px;
    display: flex;
    flex-direction: column;
    background: white;
    border: 1px solid #a0a0a0;
    box-shadow: 0 3px 14px rgba(0, 0, 0, 0.35);
}

.ribbon {
    display: grid;
    grid-template-columns: 227px 87px 102px 1fr;
    grid-template-rows: 30px 23px;
    column-gap: 2px;
    border-bottom: 1px solid #dadbdc;
}

.quick-bar {
    display: flex;
    align-items: center;
    gap: 7px;
    padding-left: 8px;
}

.bar-line {
    width: 1px;
    height: 12px;
    background: #999;
}

.quick-bar .bar-line + button {
    margin-left: 2px;
}

.quick-bar .icon8 {
    margin-left: -1px;
}

.context {
    align-self: end;
    height: 27px;
    line-height: 27px;
    text-align: center;
    white-space: nowrap;
}

.context-shortcut {
    background: #fccdb5;
    color: #6b3a22;
}

.context-app {
    background: #e9cbfb;
    color: #54306b;
}

.ribbon-title {
    display: flex;
    align-items: center;
    padding-left: 11px;
}

.ribbon-title .title {
    flex: 1;
}

.ribbon-tabs {
    display: flex;
    color: #333;
}

.ribbon-tabs button {
    width: 58px;
}

.ribbon-tabs .file-tab {
    width: 56px;
    background: #1979ca;
    color: white;
}

.manage {
    height: 16px;
    padding-top: 4px;
    color: #333;
    border: 1px solid #ddd;
    border-width: 0 1px;
}

.ribbon-end {
    display: flex;
    align-items: center;
    justify-content: flex-end;
    gap: 10px;
    padding-right: 4px;
    color: #999;
}

.tools-window .nav-bar {
    padding-top: 6px;
}

.tools-body {
    flex: 1;
    display: flex;
    padding-top: 8px;
    min-height: 0;
}

.side {
    width: 156px;
    padding-top: 15px;
    margin-right: 2px;
}

.side a {
    display: flex;
    align-items: center;
    height: 24px;
    padding-left: 32px;
}

.side a .icon16 {
    margin-right: 5px;
}

.side .root {
    padding-left: 24px;
    margin-top: 8px;
}

.side .current {
    background: #d9d9d9;
    margin-top: 0;
}

.side a .pin {
    width: 12px;
    height: 12px;
    margin: 0 2px 0 auto;
}

.files-wrap {
    flex: 1;
    position: relative;
    border-left: 1px solid #f0f0f0;
}

.sort-mark {
    position: absolute;
    left: 139px;
    top: 0;
    width: 8px;
    height: 5px;
}

.files {
    width: 593px;
    border-collapse: collapse;
    table-layout: fixed;
}

.files th {
    height: 24px;
    padding: 0 6px;
    text-align: left;
    font-weight: normal;
    color: #4c607a;
    border-right: 1px solid #e5e5e5;
}

.files .col-name {
    width: 272px;
    padding-left: 18px;
}

.files .col-mid {
    width: 120px;
}

.files thead::after {
    content: "";
    display: block;
    height: 6px;
}

.files td {
    height: 21px;
    padding: 0 6px;
    color: #6d6d6d;
}

.files td:first-child {
    padding-left: 18px;
    color: black;
}

.files td:first-child svg {
    display: inline-block;
    vertical-align: top;
    margin-right: 5px;
}

.files td:last-child {
    padding-right: 7px;
    text-align: right;
}

.selected {
    background: linear-gradient(#d4d4d4, #d4d4d4) 0 0 / 589px 100% no-repeat;
}

.status-bar {
    display: flex;
    align-items: center;
    height: 24px;
    padding-left: 14px;
    color: #1e395b;
}

.status-line {
    width: 1px;
    height: 16px;
    margin: 0 8px;
    background: #e8e8e8;
}

.view-buttons {
    display: flex;
    gap: 4px;
    margin-left: auto;
    padding-right: 8px;
}

.view-buttons .active {
    width: 22px;
    height: 24px;
    padding: 0 2px;
    border: 1px solid #26a0da;
    background: #cbe8f6;
}

/* Properties dialog */
.dialog {
    position: absolute;
    left: 241px;
    top: 234px;
    width: 481px;
    height: 691px;
    display: flex;
    flex-direction: column;
    background: #f0f0f0;
    border: 1px solid #1979ca;
    box-shadow: 0 5px 16px rgba(0, 0, 0, 0.35);
    font-size: 11px;
    line-height: 13px;
}

.dialog-title {
    display: flex;
    align-items: center;
    justify-content: space-between;
    height: 30px;
    padding: 0 9px 0 8px;
    background: white;
    font-size: 12px;
}

.dialog-title svg {
    width: 12px;
    height: 12px;
}

.tabs {
    display: flex;
    align-items: flex-end;
    height: 27px;
    padding-left: 6px;
}

.tab {
    height: 18px;
    border: 1px solid #d9d9d9;
    border-left: none;
    border-bottom: none;
    white-space: nowrap;
}

.tab-discovery { width: 57px; }
.tab-favorite { width: 92px; }
.tab-volumes { width: 112px; }
.tab-radius { width: 50px; }
.tab-config { width: 76px; }

.tabs .tab-on {
    position: relative;
    z-index: 1;
    width: 53px;
    height: 22px;
    margin-bottom: -1px;
    padding-bottom: 2px;
    background: white;
    border-left: 1px solid #d9d9d9;
}

.page {
    flex: 1;
    margin: 0 8px 0 6px;
    padding: 3px 11px 0 6px;
    background: white;
    border: 1px solid #dcdcdc;
}

fieldset {
    margin: 0;
    padding: 0 6px 0 9px;
    border: 1px solid #dcdcdc;
    min-width: 0;
}

legend {
    margin-left: -4px;
    padding: 0 2px;
}

.dialog p {
    margin: 0;
    white-space: nowrap;
}

.quick {
    height: 95px;
}

.quick p {
    padding-top: 5px;
}

.target-row {
    display: flex;
    align-items: center;
    margin-top: 21px;
}

.target-row label {
    width: 67px;
}

.target-row input {
    width: 216px;
    height: 23px;
    margin-right: auto;
    padding-left: 6px;
    border: 1px solid #1979ca;
    background: linear-gradient(black, black) 5px 3px / 1px 14px no-repeat white;
}

.btn {
    width: 73px;
    height: 21px;
    border: 1px solid #adadad;
    background: #e1e1e1;
    color: black;
}

.btn:disabled {
    border-color: #bfbfbf;
    background: #ccc;
    color: #838383;
}

.btn.default {
    border: 2px solid #0078d7;
}

.btn.wide {
    width: 106px;
    flex-shrink: 0;
}

.found {
    display: flex;
    flex-direction: column;
    margin-top: 2px;
    height: 404px;
}

.found > .btn {
    align-self: flex-end;
    margin-top: 4px;
}

.target-list {
    height: 180px;
    margin: 3px 2px 9px -2px;
    border: 1px solid #828790;
}

.target-list table {
    width: 100%;
    border-collapse: collapse;
}

.target-list th {
    height: 26px;
    padding: 0 5px 2px;
    font-weight: normal;
    text-align: left;
    border-right: 1px solid #e5e5e5;
}

.target-list .col-target {
    width: 294px;
    padding-left: 6px;
}

.action {
    display: flex;
    justify-content: space-between;
    margin-bottom: 11px;
}

.dialog-buttons {
    display: flex;
    justify-content: flex-end;
    gap: 8px;
    padding: 8px 7px 8px 0;
}

/* Taskbar */
.taskbar {
    position: relative;
    display: flex;
    height: 40px;
    background: #010305;
    color: white;
}

.task {
    width: 49px;
    display: flex;
    align-items: center;
    justify-content: center;
}

.task:first-child {
    width: 48px;
}

.cortana {
    width: 344px;
    display: flex;
    align-items: center;
    padding: 0 14px 0 9px;
    background: #333;
}

.cortana input {
    flex: 1;
    margin-left: 9px;
    font-size: 15px;
}

.cortana input::placeholder {
    color: #a6a6a6;
}

.mic {
    width: 12px;
    height: 18px;
}

.mail {
    width: 24px;
    height: 20px;
}

.open {
    border-bottom: 2px solid #76b9ed;
}

.current.task {
    background: #33393e;
}

.tray {
    display: flex;
    align-items: center;
    gap: 9px;
    margin-left: auto;
    padding-right: 25px;
    z-index: 1;
}

.people {
    width: 14px;
    height: 14px;
    margin-right: 14px;
}

.up-mark {
    width: 12px;
    height: 8px;
}

.clock {
    width: 53px;
    margin-right: 8px;
    text-align: center;
    line-height: 18px;
    white-space: nowrap;
}

.watermark {
    position: absolute;
    right: 24px;
    top: 0;
    display: flex;
    align-items: flex-start;
    gap: 10px;
    color: #777;
    font-size: 18px;
    line-height: 30px;
}

.watermark svg {
    width: 52px;
    height: 38px;
}
```
